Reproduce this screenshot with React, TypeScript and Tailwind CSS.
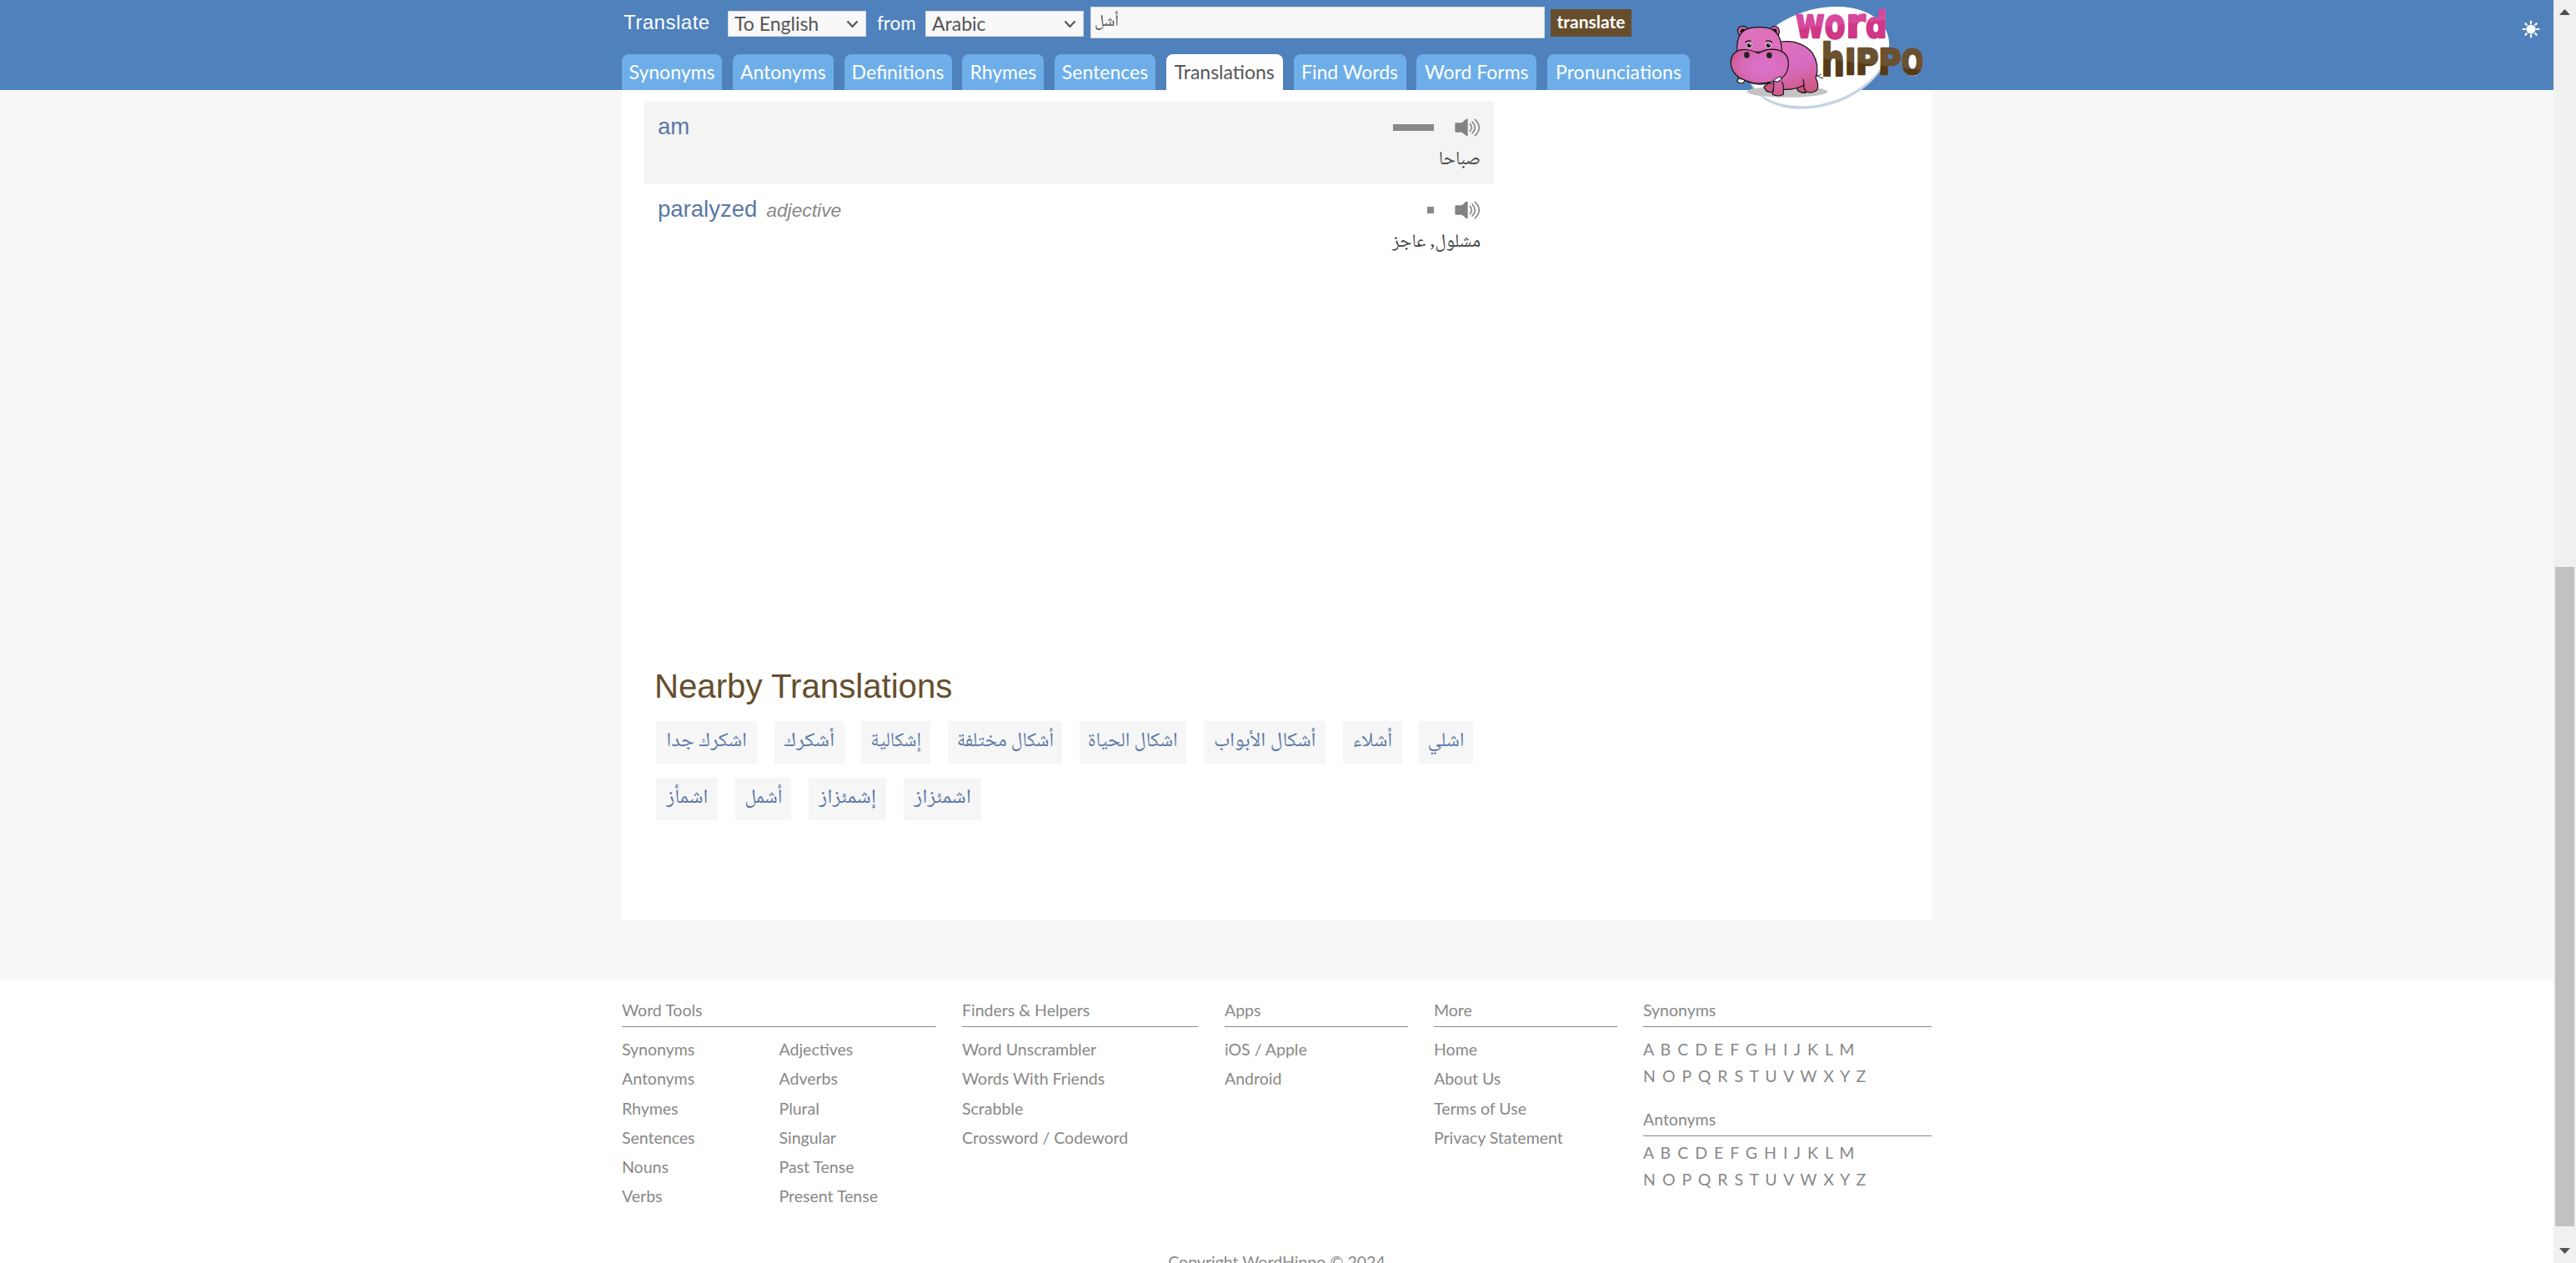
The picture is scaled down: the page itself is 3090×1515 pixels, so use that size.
const tabs: [string, string][] = [
  ["Synonyms", "w-[120px]"],
  ["Antonyms", "w-[121px]"],
  ["Definitions", "w-[129px]"],
  ["Rhymes", "w-[98px]"],
  ["Sentences", "w-[121px]"],
  ["Translations", "w-[140px]"],
  ["Find Words", "w-[135px]"],
  ["Word Forms", "w-[144px]"],
  ["Pronunciations", "w-[171px]"],
];

const nearby: [string, string, string][][] = [
  [
    ["اشكرك جدا", "w-[121px] mr-[21px]", "scale-x-[1.035]"],
    ["أشكرك", "w-[84px] mr-5", "scale-x-[1.09]"],
    ["إشكالية", "w-[83px] mr-[21px]", "scale-x-[0.96]"],
    ["أشكال مختلفة", "w-[137px] mr-[21px]", "scale-x-[0.97]"],
    ["اشكال الحياة", "w-[128px] mr-[21px]", "scale-x-[0.985]"],
    ["أشكال الأبواب", "w-[146px] mr-[21px]", "scale-x-[1.035]"],
    ["أشلاء", "w-[71px] mr-5", "scale-x-[1.02]"],
    ["اشلي", "w-[65px]", "scale-x-[1]"],
  ],
  [
    ["اشمأز", "w-[74px] mr-[21px]", "scale-x-[1.075]"],
    ["أشمل", "w-[67px] mr-[21px]", "scale-x-[0.99]"],
    ["إشمئزاز", "w-[93px] mr-[21px]", "scale-x-[1.09]"],
    ["اشمئزاز", "w-[93px]", "scale-x-[1.09]"],
  ],
];

function Select({ label, width, gap }: { label: string; width: string; gap: string }) {
  return (
    <div className={`mt-[13px] flex h-[31px] shrink-0 items-center justify-between border border-[#d5d9df] bg-[#f8f8f8] pl-[7px] pr-[8px] text-[23px] leading-[29px] text-[#555] ${width} ${gap}`}>
      <span className="whitespace-nowrap">{label}</span>
      <svg width="15" height="10" viewBox="0 0 15 10" fill="none" stroke="#555" strokeWidth="2.2">
        <path d="M1.5 1.5 L7.5 8 L13.5 1.5" />
      </svg>
    </div>
  );
}

function Speaker() {
  return (
    <svg width="31" height="22" viewBox="0 0 93 66">
      <path d="M1 20 Q1 16 5 16 L26 16 L40 3 Q47 -1 47 5 L47 61 Q47 66 41 62 L26 50 L5 50 Q1 50 1 46 Z" fill="#828282" />
      <g fill="none" stroke="#888" strokeWidth="5" strokeLinecap="round">
        <path d="M55 20 Q67 33 55 46" />
        <path d="M63 12 Q83 33 63 54" />
        <path d="M73 4 Q103 33 73 62" />
      </g>
    </svg>
  );
}

function Logo() {
  return (
    <svg width="280" height="140" viewBox="0 0 840 420">
      <defs>
        <linearGradient id="body" x1="0" y1="0" x2="0.3" y2="1">
          <stop offset="0" stopColor="#e070b8" />
          <stop offset="0.55" stopColor="#d86cc4" />
          <stop offset="1" stopColor="#cf5a86" />
        </linearGradient>
        <radialGradient id="snout" cx="0.6" cy="0.5" r="0.7">
          <stop offset="0" stopColor="#dc72cc" />
          <stop offset="0.6" stopColor="#d76bb8" />
          <stop offset="1" stopColor="#cc5284" />
        </radialGradient>
        <linearGradient id="pink" gradientUnits="userSpaceOnUse" x1="440" y1="40" x2="450" y2="140">
          <stop offset="0.5" stopColor="#d6499c" />
          <stop offset="0.53" stopColor="#cf3886" />
        </linearGradient>
        <linearGradient id="brown" gradientUnits="userSpaceOnUse" x1="590" y1="150" x2="575" y2="278">
          <stop offset="0.62" stopColor="#6a5130" />
          <stop offset="0.65" stopColor="#573a18" />
        </linearGradient>
      </defs>
      <ellipse cx="394" cy="208" rx="262" ry="174" transform="rotate(-18 394 208)" fill="#c5d3e2" />
      <ellipse cx="395" cy="203" rx="260" ry="168" transform="rotate(-18 395 203)" fill="#fff" />
      <ellipse cx="282" cy="330" rx="145" ry="20" fill="#c3c3c3" />
      <g stroke="#111" strokeWidth="3.5" strokeLinejoin="round" strokeLinecap="round">
        <path d="M384 262 Q396 284 410 280 M384 274 Q396 276 402 268" fill="none" strokeWidth="3" />
        <path d="M198 312 Q204 334 228 332 L240 300 L214 300 Z M316 318 Q320 334 348 334 L352 300 L326 306 Z" fill="#c75482" />
        <path d="M258 150 Q330 142 372 190 Q400 236 384 280 Q396 304 390 322 Q374 338 350 330 Q338 314 342 306 Q310 324 268 322 L268 340 Q250 350 228 340 Q236 312 232 296 Q200 250 258 150 Z" fill="url(#body)" />
        <path d="M342 306 Q342 294 338 286 M268 322 Q270 308 262 294" fill="none" />
        <path d="M112 130 Q94 108 112 96 Q136 88 142 112 Z M218 108 Q226 90 244 96 Q262 110 246 132 Z" fill="#d867ac" />
        <path d="M120 122 Q108 112 120 105 Q132 104 134 114 Z M226 112 Q230 102 240 106 Q246 114 238 124 Z" fill="#111" />
        <path d="M102 188 Q92 94 180 98 Q262 92 262 186 Z" fill="#dc70ba" />
        <path d="M106 276 L102 294 Q112 302 124 298 L130 280 Z M232 284 Q236 296 246 294 Q258 290 260 282 L256 272 Z" fill="#fff" />
        <path d="M177 192 Q206 174 238 178 Q286 184 286 230 Q284 284 226 294 Q196 302 168 300 Q90 286 80 238 Q72 190 116 179 Q148 176 177 192 Z" fill="url(#snout)" />
        <path d="M106 284 L102 294 Q112 302 124 298 L128 288 Z M234 288 Q238 296 246 294 Q258 290 260 284 L256 276 Z" fill="#fff" strokeWidth="2.5" />
        <path d="M140 294 Q180 312 222 296" fill="none" />
        <path d="M132 152 Q140 144 150 148 M206 148 Q218 144 226 152" fill="none" strokeWidth="4" />
      </g>
      <circle cx="145" cy="163" r="10" fill="#fff" />
      <circle cx="214" cy="163" r="10" fill="#fff" />
      <circle cx="145" cy="163" r="8" fill="#111" />
      <circle cx="214" cy="163" r="8" fill="#111" />
      <circle cx="148" cy="160" r="2.5" fill="#fff" />
      <circle cx="217" cy="160" r="2.5" fill="#fff" />
      <ellipse cx="136" cy="198" rx="10" ry="11" fill="#222" />
      <ellipse cx="217" cy="199" rx="10" ry="11" fill="#222" />
      <ellipse cx="733" cy="224" rx="38" ry="50" fill="#fff" />
      <g className="font-['DejaVu_Sans'] font-bold" strokeWidth="8" strokeLinejoin="round">
        <g fill="url(#pink)" stroke="url(#pink)">
          <text x="312" y="136" fontSize="150" textLength="104" lengthAdjust="spacingAndGlyphs">w</text>
          <text x="416" y="138" fontSize="150" textLength="74" lengthAdjust="spacingAndGlyphs">o</text>
          <text x="493" y="136" fontSize="150" textLength="70" lengthAdjust="spacingAndGlyphs">r</text>
          <text x="564" y="136" fontSize="130" textLength="76" lengthAdjust="spacingAndGlyphs">d</text>
        </g>
        <g fill="url(#brown)" stroke="url(#brown)">
          <text x="404" y="272" fontSize="158" textLength="84" lengthAdjust="spacingAndGlyphs">h</text>
          <text x="489" y="268" fontSize="128" textLength="40" lengthAdjust="spacingAndGlyphs">I</text>
          <text x="528" y="268" fontSize="128" textLength="82" lengthAdjust="spacingAndGlyphs">P</text>
          <text x="610" y="268" fontSize="128" textLength="82" lengthAdjust="spacingAndGlyphs">P</text>
          <text x="692" y="266" fontSize="124" textLength="80" lengthAdjust="spacingAndGlyphs">O</text>
        </g>
      </g>
    </svg>
  );
}

function Result({ word, kind, arabic, bar, shaded }: { word: string; kind?: string; arabic: string; bar: string; shaded?: boolean }) {
  return (
    <div className={`flex w-[1019px] justify-between px-4 ${shaded ? "h-[99px] bg-[#f4f4f4]" : "h-[98px]"}`}>
      <div className="flex h-[60px] items-baseline font-['Liberation_Sans'] leading-[60px]">
        <span className="text-[27.5px] text-[#5a78a6]">{word}</span>
        {kind && <span className="ml-[11px] text-[22.8px] italic text-[#888]">{kind}</span>}
      </div>
      <div className="flex flex-col items-end">
        <div className="mt-[19px] flex h-[23px] items-center gap-[25px]">
          <div className={`h-[8px] bg-[#888] ${bar}`} />
          <Speaker />
        </div>
        <div dir="rtl" className="mt-[6px] h-[44px] whitespace-nowrap font-['Noto_Naskh_Arabic',serif] text-[22.6px] leading-[44px] text-[#444]">
          {arabic}
        </div>
      </div>
    </div>
  );
}

function Heading({ children }: { children: string }) {
  return <div className="h-[32px] border-b border-[#888] leading-[24px]">{children}</div>;
}

function Links({ items, width = "" }: { items: string[]; width?: string }) {
  return (
    <ul className={`leading-[35.3px] ${width}`}>
      {items.map((t) => (
        <li key={t} className="whitespace-nowrap">{t}</li>
      ))}
    </ul>
  );
}

function Letters() {
  return (
    <div className="whitespace-nowrap leading-[32px] [word-spacing:3px]">
      <div>A B C D E F G H I J K L M</div>
      <div>N O P Q R S T U V W X Y Z</div>
    </div>
  );
}

export default function App() {
  return (
    <div className="flex h-[1515px] w-[3090px] overflow-hidden bg-white font-['Lato']">
      <div className="relative flex w-[3063px] flex-col">
        <header className="h-[108px] shrink-0 bg-[#4f81bc] pl-[746px]">
          <div className="flex h-[65px] text-white">
            <div className="w-[127px] shrink-0 pl-[2px] pt-[8px] font-['Liberation_Sans'] text-[24px] leading-[38px] tracking-[0.5px]">Translate</div>
            <Select label="To English" width="w-[166px]" gap="" />
            <div className="w-[71px] shrink-0 pl-[13px] pt-[9px] text-[22.4px] leading-[38px]">from</div>
            <Select label="Arabic" width="w-[190px]" gap="mr-[8px]" />
            <div className="mt-[8px] h-[38px] w-[545px] shrink-0 border border-[#d5d9df] bg-[#f8f8f8] pl-[4px] font-['Noto_Naskh_Arabic',serif] text-[19.5px] leading-[36px] text-[#555]">أشل</div>
            <div className="ml-[7px] mt-[11px] h-[33px] w-[97px] shrink-0 bg-[#664e2d] text-center text-[21px] font-bold leading-[30px]">translate</div>
          </div>
          <div className="flex gap-[12.75px]">
            {tabs.map(([t, w]) => (
              <div key={t} className={`h-[43px] shrink-0 whitespace-nowrap rounded-t-[8px] text-center text-[23px] leading-[43px] ${w} ${t === "Translations" ? "bg-white text-[#555]" : "bg-[#6eaee8] text-white"}`}>
                {t}
              </div>
            ))}
          </div>
        </header>
        <div className="absolute left-[2050px] top-0"><Logo /></div>
        <svg className="absolute left-[3025px] top-[24px]" width="22" height="22" viewBox="-11 -11 22 22">
          <circle r="5.6" fill="#fff" />
          <path d="M0 -9.5V-7M0 9.5V7M-9.5 0H-7M9.5 0H7M-6.6 -6.6L-5.2 -5.2M6.6 -6.6L5.2 -5.2M-6.6 6.6L-5.2 5.2M6.6 6.6L5.2 5.2" stroke="#fff" strokeWidth="2.2" strokeLinecap="round" />
        </svg>

        <main className="h-[1067px] shrink-0 bg-[#f8f8f8] pl-[746px]">
          <div className="h-[995px] w-[1571px] bg-white pl-[27px] pt-[14px]">
            <Result word="am" arabic="صباحا" bar="w-[49px]" shaded />
            <Result word="paralyzed" kind="adjective" arabic="مشلول, عاجز" bar="w-[8px]" />
            <h2 className="ml-[12px] mt-[476px] h-[70px] font-['Liberation_Sans'] text-[40.2px] leading-[58px] text-[#664e2d]">Nearby Translations</h2>
            <div className="ml-[14px] flex flex-col gap-[17px]">
              {nearby.map((row, i) => (
                <div key={i} className="flex">
                  {row.map(([t, w, s]) => (
                    <div key={t} className={`flex h-[51px] shrink-0 justify-center bg-[#f6f6f6] text-[24px] leading-[50px] text-[#5a78a6] ${w}`}>
                      <span dir="rtl" className={`whitespace-nowrap font-['Noto_Naskh_Arabic',serif] ${s}`}>{t}</span>
                    </div>
                  ))}
                </div>
              ))}
            </div>
          </div>
        </main>

        <footer className="flex h-[340px] shrink-0 flex-col overflow-hidden pl-[746px] pt-[25px] text-[19.5px] text-[#888]">
          <div className="flex h-[292px] shrink-0">
            <div className="mr-[31px] w-[377px]">
              <Heading>Word Tools</Heading>
              <div className="flex pt-[9px]">
                <Links width="w-[188.5px]" items={["Synonyms", "Antonyms", "Rhymes", "Sentences", "Nouns", "Verbs"]} />
                <Links items={["Adjectives", "Adverbs", "Plural", "Singular", "Past Tense", "Present Tense"]} />
              </div>
            </div>
            <div className="mr-[32px] w-[283px]">
              <Heading>{"Finders & Helpers"}</Heading>
              <div className="pt-[9px]"><Links items={["Word Unscrambler", "Words With Friends", "Scrabble", "Crossword / Codeword"]} /></div>
            </div>
            <div className="mr-[31px] w-[220px]">
              <Heading>Apps</Heading>
              <div className="pt-[9px]"><Links items={["iOS / Apple", "Android"]} /></div>
            </div>
            <div className="mr-[31px] w-[220px]">
              <Heading>More</Heading>
              <div className="pt-[9px]"><Links items={["Home", "About Us", "Terms of Use", "Privacy Statement"]} /></div>
            </div>
            <div className="w-[346px]">
              <Heading>Synonyms</Heading>
              <div className="h-[99px] pt-[11px]"><Letters /></div>
              <Heading>Antonyms</Heading>
              <div className="pt-[4px]"><Letters /></div>
            </div>
          </div>
          <div className="mt-[7px] w-[1571px] shrink-0 text-center leading-[30px]">Copyright WordHippo © 2024</div>
        </footer>
      </div>

      <aside className="flex w-[27px] flex-col items-center bg-[#f0f0f0]">
        <svg className="mt-[11px]" width="13" height="7" viewBox="0 0 13 7"><path d="M0 7L6.5 0L13 7Z" fill="#505050" /></svg>
        <div className="mt-[662px] h-[791px] w-[23px] bg-[#c1c1c1]" />
        <svg className="mt-[26px]" width="13" height="7" viewBox="0 0 13 7"><path d="M0 0L6.5 7L13 0Z" fill="#505050" /></svg>
      </aside>
    </div>
  );
}
